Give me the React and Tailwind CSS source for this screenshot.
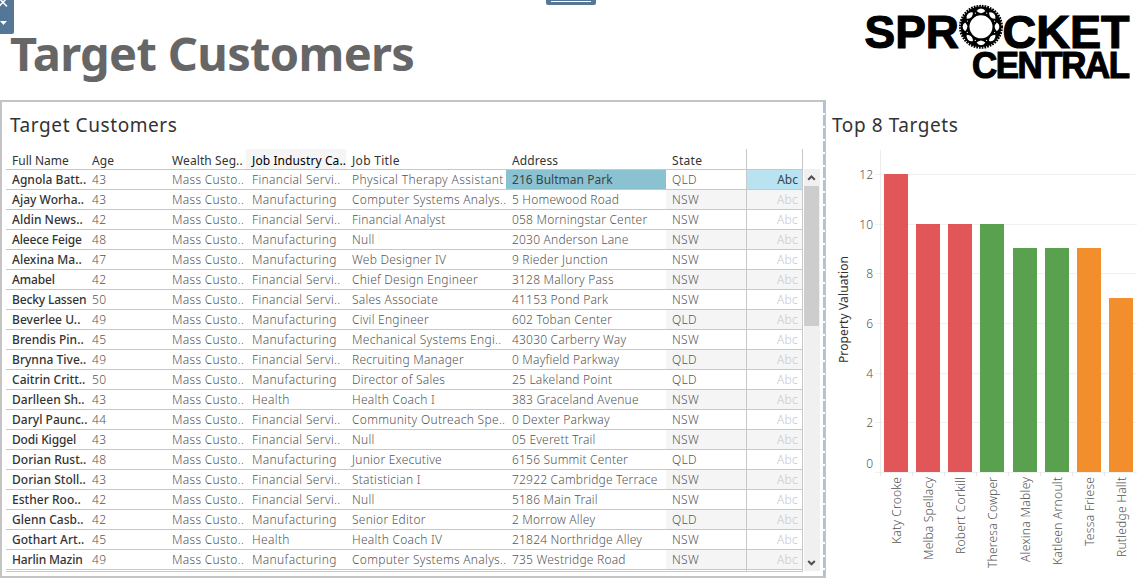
import React from "react";

const rows = [
  ["Agnola Batt..", "43", "F", "Physical Therapy Assistant", "216 Bultman Park", "QLD"],
  ["Ajay Worha..", "43", "M", "Computer Systems Analys..", "5 Homewood Road", "NSW"],
  ["Aldin News..", "42", "F", "Financial Analyst", "058 Morningstar Center", "NSW"],
  ["Aleece Feige", "48", "M", "Null", "2030 Anderson Lane", "NSW"],
  ["Alexina Ma..", "47", "M", "Web Designer IV", "9 Rieder Junction", "NSW"],
  ["Amabel", "42", "F", "Chief Design Engineer", "3128 Mallory Pass", "NSW"],
  ["Becky Lassen", "50", "F", "Sales Associate", "41153 Pond Park", "NSW"],
  ["Beverlee U..", "49", "M", "Civil Engineer", "602 Toban Center", "QLD"],
  ["Brendis Pin..", "45", "M", "Mechanical Systems Engi..", "43030 Carberry Way", "NSW"],
  ["Brynna Tive..", "49", "F", "Recruiting Manager", "0 Mayfield Parkway", "QLD"],
  ["Caitrin Critt..", "50", "M", "Director of Sales", "25 Lakeland Point", "QLD"],
  ["Darlleen Sh..", "43", "H", "Health Coach I", "383 Graceland Avenue", "NSW"],
  ["Daryl Paunc..", "44", "F", "Community Outreach Spe..", "0 Dexter Parkway", "NSW"],
  ["Dodi Kiggel", "43", "F", "Null", "05 Everett Trail", "NSW"],
  ["Dorian Rust..", "48", "M", "Junior Executive", "6156 Summit Center", "QLD"],
  ["Dorian Stoll..", "43", "F", "Statistician I", "72922 Cambridge Terrace", "NSW"],
  ["Esther Roo..", "42", "F", "Null", "5186 Main Trail", "NSW"],
  ["Glenn Casb..", "42", "M", "Senior Editor", "2 Morrow Alley", "QLD"],
  ["Gothart Art..", "45", "H", "Health Coach IV", "21824 Northridge Alley", "NSW"],
  ["Harlin Mazin", "49", "M", "Computer Systems Analys..", "735 Westridge Road", "NSW"],
];

const industries = { F: "Financial Servi..", M: "Manufacturing", H: "Health" };

const bars = [
  { name: "Katy Crooke", x: 884, top: 174, color: "#e15759", len: 67 },
  { name: "Melba Spellacy", x: 916, top: 224, color: "#e15759", len: 83 },
  { name: "Robert Corkill", x: 948, top: 224, color: "#e15759", len: 77 },
  { name: "Theresa Cowper", x: 980, top: 224, color: "#59a14f", len: 91 },
  { name: "Alexina Mabley", x: 1013, top: 248, color: "#59a14f", len: 85 },
  { name: "Katleen Arnoult", x: 1045, top: 248, color: "#59a14f", len: 88 },
  { name: "Tessa Friese", x: 1077, top: 248, color: "#f28e2b", len: 69 },
  { name: "Rutledge Hallt", x: 1109, top: 298, color: "#f28e2b", len: 80 },
];

const ticks = [
  [12, 174], [10, 224], [8, 273], [6, 323], [4, 373], [2, 422], [0, 472],
];

const GRID =
  "grid grid-cols-[80px_80px_80px_100px_160px_160px_80px_57px] w-[797px] border-b border-[#c8c8c8]";
const CELL = "pl-[6px] whitespace-nowrap leading-[20px] h-[19px]";

function Logo() {
  const angles = [0, 45, 90, 135, 180, 225, 270, 315];
  return (
    <svg width="270" height="90" viewBox="860 0 270 90" className="block shrink-0 overflow-visible">
      <g fontFamily="Liberation Sans, Arial, sans-serif" fontWeight="700" fill="#000" stroke="#000" strokeWidth="1.2">
        <text x="864.5" y="47.8" fontSize="47" textLength="94.5" lengthAdjust="spacingAndGlyphs">SPR</text>
        <text x="1002.5" y="47.8" fontSize="47" textLength="127" lengthAdjust="spacingAndGlyphs">CKET</text>
        <text transform="translate(972 77.8) scale(0.93 1)" fontSize="37.5" textLength="170">CENTRAL</text>
      </g>
      <g transform="translate(981 26.8)">
        <circle r="20.8" fill="none" stroke="#000" strokeWidth="2.4" strokeDasharray="1.7 1.03" />
        <circle r="15.9" fill="none" stroke="#000" strokeWidth="8.8" />
        {angles.map((a) => (
          <g key={a} transform={`rotate(${a})`}>
            <path d="M-4.4 -15.8 Q-3 -18.4 0 -18.4 Q3 -18.4 4.4 -15.8 Q2.4 -13.8 0 -13.6 Q-2.4 -13.8 -4.4 -15.8Z" fill="#fff" />
            <circle cx="5.7" cy="-13.6" r="0.6" fill="#fff" />
          </g>
        ))}
      </g>
    </svg>
  );
}

function Table() {
  return (
    <div className="flex w-[826px] h-[478px] border-t-2 border-l-2 border-b-2 border-[#c4c4c4]">
      <div className="flex flex-col w-[821px] pl-[4px]">
        <h2 className="h-[47px] pl-[4px] pt-[9px] text-[19px] leading-[28px] text-[#333] tracking-[0.58px]">Target Customers</h2>
        <div className="flex">
          <div className="w-[797px] text-[12px] font-light text-[#555] tracking-[0.3px]">
            <div className={`${GRID} h-[21px] font-normal text-[#333] tracking-[0.1px]`}>
              <div className="pl-[6px] pt-[2px] whitespace-nowrap leading-[20px] tracking-normal">Full Name</div>
              <div className="pl-[6px] pt-[2px] leading-[20px]">Age</div>
              <div className="pl-[6px] pt-[2px] whitespace-nowrap leading-[20px]">Wealth Seg..</div>
              <div className="pl-[6px] pt-[2px] whitespace-nowrap leading-[20px] h-[20px] bg-[#f5f5f5] text-black">Job Industry Ca..</div>
              <div className="pl-[6px] pt-[2px] leading-[20px] tracking-[0.3px]">Job Title</div>
              <div className="pl-[6px] pt-[2px] leading-[20px]">Address</div>
              <div className="pl-[6px] pt-[2px] leading-[20px] tracking-[0.3px]">State</div>
              <div className="border-x border-[#c8c8c8]" />
            </div>
            {rows.map((r, i) => (
              <div key={i} className={`${GRID} h-[20px]`}>
                <div className={`${CELL} font-medium text-[#333] ${r[0].endsWith("..") ? "tracking-[0.03px]" : "tracking-[-0.15px]"}`}>{r[0]}</div>
                <div className={CELL}>{r[1]}</div>
                <div className={CELL}>Mass Custo..</div>
                <div className={`${CELL} tracking-[0.35px]`}>{industries[r[2]]}</div>
                <div className={`${CELL} ${i === 0 ? "tracking-[0.38px]" : r[3].endsWith("..") ? "tracking-[0.3px]" : "tracking-[0.24px]"}`}>{r[3]}</div>
                <div className={`${CELL} ${i === 0 ? "bg-[#8bc2d1] text-[#3a4448] font-normal tracking-[0.03px]" : "tracking-[0.2px]"}`}>{r[4]}</div>
                <div className={`${CELL} ${i % 2 ? "bg-[#f5f5f5]" : ""}`}>{r[5]}</div>
                <div className={`border-x border-[#c8c8c8] pr-[4px] h-[19px] text-right leading-[20px] ${i === 0 ? "bg-[#b9e3f1] text-[#3a4448] font-normal tracking-normal" : i % 2 ? "bg-[#f5f5f5] text-[#c8c8c8]" : "text-[#c8c8c8]"}`}>Abc</div>
              </div>
            ))}
            <div className={`${GRID} h-[2px]`}>
              <div className="col-start-8 border-x border-[#c8c8c8]" />
            </div>
          </div>
          <div className="flex flex-col w-[16px] ml-px mt-[20px] h-[402px] bg-[#f0f0f0]">
            <svg width="16" height="17" viewBox="0 0 16 17" className="block shrink-0">
              <path d="M4.2 10.8 L7.5 7.5 L10.8 10.8" fill="none" stroke="#505050" strokeWidth="2" />
            </svg>
            <div className="h-[140px] w-[15px] bg-[#cdcdcd]" />
            <div className="grow" />
            <svg width="16" height="17" viewBox="0 0 16 17" className="block shrink-0">
              <path d="M4.2 7 L7.5 10.3 L10.8 7" fill="none" stroke="#505050" strokeWidth="2" />
            </svg>
          </div>
        </div>
      </div>
      <div className="w-[2px] bg-[repeating-linear-gradient(to_bottom,#b3bfd2_0px,#b3bfd2_11px,#ffffff_11px,#ffffff_13px)]" />
      <div className="w-px bg-[#c4c4c4]" />
    </div>
  );
}

function Chart() {
  return (
    <svg width="319" height="435" viewBox="826 146 319 435" className="block" fontFamily="Noto Sans, sans-serif" fontSize="12">
      <g shapeRendering="crispEdges">
        {ticks.map(([v, y]) => (
          <rect key={v} x="875" y={y} width="262" height="1" fill="#f1f1f1" />
        ))}
        <rect x="880" y="150" width="1" height="325" fill="#ececec" />
        {bars.map((b, i) => (
          <g key={b.name}>
            <rect x={880 + i * 32} y="472" width="1" height="4" fill="#e6e6e6" />
            <rect x={b.x} y={b.top} width="24" height={472 - b.top} fill={b.color} />
          </g>
        ))}
      </g>
      {ticks.map(([v, y]) => (
        <text key={v} x="873" y={v === 0 ? 468 : y + 5} textAnchor="end" fill="#555" fontWeight="300">{v}</text>
      ))}
      <text transform="translate(848 363) rotate(-90)" fill="#333" textLength="107">Property Valuation</text>
      {bars.map((b) => (
        <text key={b.name} transform={`translate(${b.x + 17} ${477 + b.len}) rotate(-90)`} fill="#555" fontWeight="300" textLength={b.len}>{b.name}</text>
      ))}
    </svg>
  );
}

export default function App() {
  return (
    <div className="relative w-[1145px] h-[581px] overflow-hidden bg-white font-['Noto_Sans',sans-serif]">
      <header className="flex justify-between h-[100px] pr-[15px]">
        <h1 className="pl-[10px] pt-[21px] text-[47px] leading-[64px] font-bold text-[#666] whitespace-nowrap tracking-[-0.67px]">Target Customers</h1>
        <Logo />
      </header>
      <div className="flex">
        <Table />
        <section className="w-[319px]">
          <h2 className="h-[46px] pl-[6px] pt-[11px] text-[19px] leading-[28px] text-[#333] tracking-[0.58px]">Top 8 Targets</h2>
          <Chart />
        </section>
      </div>
      <div className="absolute left-0 top-0 w-[14px] h-[34px] rounded-br-[2px] bg-[#557797]">
        <svg width="14" height="34" viewBox="0 0 14 34" className="block">
          <path d="M-1 -2 L7 6.5 M7 -2 L-1 6.5" stroke="#fff" strokeWidth="1.5" />
          <path d="M0 21 H7 L3.5 25Z" fill="#fff" />
        </svg>
      </div>
      <div className="absolute left-[546px] top-0 w-[50px] h-[5px] rounded-b-[2px] bg-[#557797] px-[5px] pt-px">
        <div className="h-px bg-white" />
      </div>
    </div>
  );
}
